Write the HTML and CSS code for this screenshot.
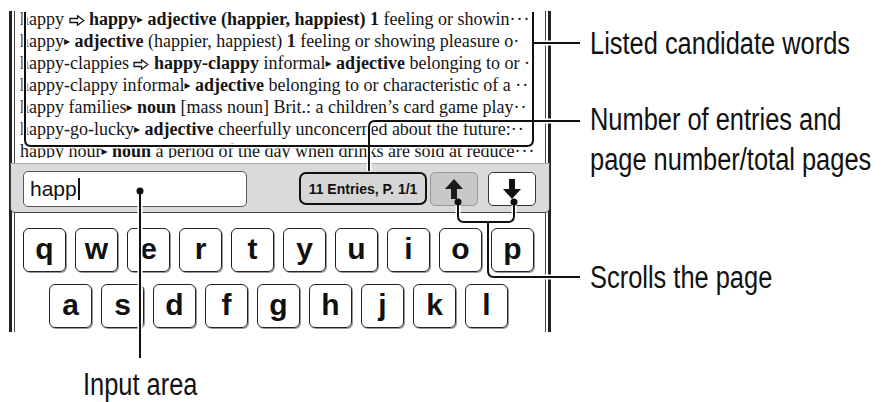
FILE: index.html
```html
<!DOCTYPE html>
<html lang="en">
<head>
    <meta charset="UTF-8">
    <title>Dictionary search screen</title>
    <link rel="stylesheet" href="styles.css">
</head>
<body>
    <div class="figure">
        <div class="device">
            <div class="screen">
                <!-- Candidate list -->
                <div class="list">
                    <p class="row">happy <svg class="arrow" width="16" height="11" viewBox="0 0 16 11"><path d="M1 3.5 H8.5 V0.8 L14.8 5.5 L8.5 10.2 V7.5 H1 Z" fill="none" stroke="#151515" stroke-width="1.3"/></svg> <b>happy</b><span class="tri">▸</span> <b>adjective (happier, happiest)</b> <b>1</b> feeling or showin<span class="more">···</span></p>
                    <p class="row">happy<span class="tri">▸</span> <b>adjective</b> (happier, happiest) <b>1</b> feeling or showing pleasure o<span class="more">·</span></p>
                    <p class="row">happy-clappies <svg class="arrow" width="16" height="11" viewBox="0 0 16 11"><path d="M1 3.5 H8.5 V0.8 L14.8 5.5 L8.5 10.2 V7.5 H1 Z" fill="none" stroke="#151515" stroke-width="1.3"/></svg> <b>happy-clappy</b> informal<span class="tri">▸</span> <b>adjective</b> belonging to or <span class="more">··</span></p>
                    <p class="row">happy-clappy informal<span class="tri">▸</span> <b>adjective</b> belonging to or characteristic of a <span class="more">··</span></p>
                    <p class="row">happy families<span class="tri">▸</span> <b>noun</b> [mass noun] Brit.: a children’s card game play<span class="more">··</span></p>
                    <p class="row">happy-go-lucky<span class="tri">▸</span> <b>adjective</b> cheerfully unconcerned about the future:<span class="more">··</span></p>
                    <p class="row">happy hour<span class="tri">▸</span> <b>noun</b> a period of the day when drinks are sold at reduce<span class="more">···</span></p>
                </div>

                <!-- Search bar -->
                <div class="toolbar">
                    <div class="search-input">happ<span class="cursor"></span></div>
                    <div class="entries">11 Entries, P. 1/1</div>
                    <div class="page-btn disabled">
                        <svg width="18" height="20" viewBox="0 0 18 20"><polygon points="9,0 18,10 12,10 12,20 6,20 6,10 0,10" fill="#1a1a1a"/></svg>
                    </div>
                    <div class="page-btn">
                        <svg width="18" height="20" viewBox="0 0 18 20"><polygon points="9,20 18,10 12,10 12,0 6,0 6,10 0,10" fill="#111"/></svg>
                    </div>
                </div>

                <!-- Keyboard -->
                <div class="keyboard">
                    <div class="key-row">
                        <span class="key">q</span><span class="key">w</span><span class="key">e</span><span class="key">r</span><span class="key">t</span><span class="key">y</span><span class="key">u</span><span class="key">i</span><span class="key">o</span><span class="key">p</span>
                    </div>
                    <div class="key-row second">
                        <span class="key">a</span><span class="key">s</span><span class="key">d</span><span class="key">f</span><span class="key">g</span><span class="key">h</span><span class="key">j</span><span class="key">k</span><span class="key">l</span>
                    </div>
                </div>
            </div>
        </div>

        <div class="labels">
            <div class="label listed"><span>Listed candidate words</span></div>
            <div class="label entries-label"><span>Number of entries and</span><br><span>page number/total pages</span></div>
            <div class="label scroll"><span>Scrolls the page</span></div>
        </div>

        <div class="label input-label"><span>Input area</span></div>

        <!-- Callout lines drawn over the screenshot -->
        <svg class="callouts" width="885" height="402" viewBox="0 0 885 402">
            <g fill="none" stroke="#fff" stroke-width="5">
                <path d="M25 12 V140 Q25 146 31 146 H527 Q533 146 533 140 V12"/>
                <path d="M535 43 H580"/>
                <path d="M369 171 V127 Q369 121 375 121 H580"/>
                <path d="M458 202 V216 Q458 222 464 222 H508 Q514 222 514 216 V202"/>
                <path d="M488 222 V271 Q488 277 494 277 H580"/>
                <path d="M140 191 V358"/>
            </g>
            <g fill="none" stroke="#111" stroke-width="2">
                <path d="M25 12 V140 Q25 146 31 146 H527 Q533 146 533 140 V12"/>
                <path d="M533 43 H580"/>
                <path d="M369 171 V127 Q369 121 375 121 H580"/>
                <path d="M458 202 V216 Q458 222 464 222 H508 Q514 222 514 216 V202"/>
                <path d="M488 222 V271 Q488 277 494 277 H580"/>
                <path d="M140 191 V358"/>
            </g>
            <g fill="#111">
                <circle cx="458" cy="202" r="3.5"/>
                <circle cx="514" cy="202" r="3.5"/>
                <circle cx="140" cy="191" r="3.5"/>
            </g>
        </svg>
    </div>
</body>
</html>
```

FILE: styles.css
```css
body {
    margin: 0;
    background-color: #fff;
    font-family: "Liberation Sans", Arial, sans-serif;
    color: #111;
}

.figure {
    position: relative;
    width: 885px;
    height: 402px;
    display: grid;
    grid-template-columns: 590px 1fr;
    grid-template-rows: 332px 1fr;
    overflow: hidden;
}

/* Device frame: thick outer line, thin inner line */
.device {
    margin: 11px 0 0 9px;
    width: 542px;
    height: 321px;
    box-sizing: border-box;
    border-left: 3px solid #222;
    border-right: 3px solid #222;
    padding: 0 2px;
}

.screen {
    height: 100%;
    border-left: 1px solid #444;
    border-right: 1px solid #444;
    display: flex;
    flex-direction: column;
}

.list {
    height: 150px;
    margin-top: -3px;
    overflow: hidden;
    font-family: "Liberation Serif", "Times New Roman", serif;
    font-size: 18px;
    line-height: 22px;
    color: #151515;
}

.row {
    margin: 0;
    padding-left: 5px;
    white-space: nowrap;
}

.tri {
    font-family: "DejaVu Sans", sans-serif;
    font-size: 12px;
    vertical-align: 2px;
}

.arrow {
    vertical-align: -1px;
}

.more {
    letter-spacing: 1px;
}

.toolbar {
    margin: 5px -5px 0;
    height: 50px;
    box-sizing: border-box;
    padding: 7px 12px 0;
    display: flex;
    align-items: flex-start;
    background-color: #dadada;
    border: 1px solid #444;
    border-top-color: #aaa;
    border-radius: 0 0 5px 5px;
}

.search-input {
    width: 224px;
    height: 36px;
    box-sizing: border-box;
    padding-left: 6px;
    background-color: #fff;
    border: 1px solid #555;
    border-radius: 5px;
    font-size: 21px;
    line-height: 34px;
    display: flex;
    align-items: center;
}

.cursor {
    display: inline-block;
    width: 2px;
    height: 22px;
    margin-left: 1px;
    background-color: #111;
}

.entries {
    margin: 1px 0 0 52px;
    width: 128px;
    height: 33px;
    box-sizing: border-box;
    border: 2px solid #111;
    border-radius: 7px;
    background-color: #d6d6d6;
    font-weight: bold;
    font-size: 14px;
    display: flex;
    align-items: center;
    justify-content: center;
}

.page-btn {
    margin: 1px 0 0 10px;
    width: 48px;
    height: 34px;
    box-sizing: border-box;
    border: 1px solid #333;
    border-radius: 5px;
    background-color: #fff;
    display: flex;
    align-items: center;
    justify-content: center;
}

.page-btn.disabled {
    margin-left: 3px;
    background-color: #c8c8c8;
    border-color: #999;
}

.keyboard {
    margin-top: 15px;
    display: flex;
    flex-direction: column;
    gap: 12px;
}

.key-row {
    display: flex;
    gap: 9px;
    padding-left: 8px;
}

.key-row.second {
    padding-left: 34px;
}

.key {
    width: 43px;
    height: 44px;
    box-sizing: border-box;
    border: 1px solid #222;
    border-radius: 6px;
    box-shadow: 1px 1px 0 #999;
    font-weight: bold;
    font-size: 30px;
    display: flex;
    align-items: center;
    justify-content: center;
    padding-bottom: 3px;
}

/* Callout labels: condensed face, narrowed from Liberation Sans */
.label {
    font-size: 31px;
    line-height: 40px;
    white-space: nowrap;
}

.label span {
    display: inline-block;
    transform: scaleX(0.82);
    transform-origin: left center;
}

.listed {
    margin-top: 24px;
}

.entries-label {
    margin-top: 36px;
}

.scroll {
    margin-top: 78px;
}

.input-label {
    margin: 33px 0 0 83px;
}

.callouts {
    position: absolute;
    top: 0;
    left: 0;
    pointer-events: none;
}
```
